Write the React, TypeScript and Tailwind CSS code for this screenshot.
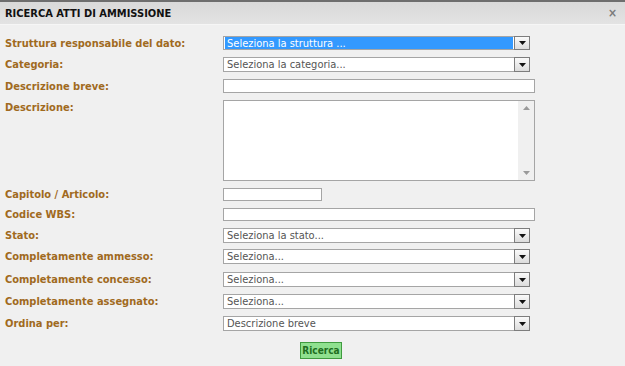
import React from "react"

const labelCls = "w-[218px] shrink-0 font-bold text-[11px] leading-none text-[#a06a1e]"

function SelectBox({ text, highlight, h = "h-[15px]" }: { text: string; highlight?: boolean; h?: string }) {
  return (
    <div className={`flex w-[307px] ${h} items-stretch border border-[#a5a5a5] bg-white`}>
      <div className="flex flex-1 items-center px-[1px]">
        <span
          className={`flex h-full flex-1 items-center px-[2px] text-[11px] leading-none ${
            highlight ? "bg-[#3399ff] text-white" : "text-[#555]"
          }`}
        >
          {text}
        </span>
      </div>
      <div className="my-[-1px] mr-[-1px] flex w-[16px] items-center justify-center border border-[#7d7d7d] bg-gradient-to-b from-[#fafafa] to-[#dcdcdc]">
        <svg width="7" height="4" viewBox="0 0 7 4">
          <path d="M0 0 L7 0 L3.5 4 Z" fill="#111" />
        </svg>
      </div>
    </div>
  )
}

function Row({ label, mt, children, top }: { label: string; mt: string; children: React.ReactNode; top?: boolean }) {
  return (
    <div className={`flex ${top ? "items-start" : "items-center"} ${mt}`}>
      <div className={`${labelCls} ${top ? "pt-[2px]" : ""}`}>{label}</div>
      {children}
    </div>
  )
}

export default function App() {
  return (
    <div
      className="h-[366px] w-[625px] overflow-hidden bg-[#f0f0f0]"
      style={{ fontFamily: "Tahoma, 'DejaVu Sans Condensed', 'DejaVu Sans', sans-serif" }}
    >
      <div className="flex h-[25px] items-center justify-between border-t-[2px] border-[#6e6e6e] border-b border-b-[#f6f6f6] bg-gradient-to-b from-[#d9d9d9] to-[#e3e3e3] pl-[5px] pr-[8px]">
        <span className="text-[11px] font-bold leading-none text-[#111]">RICERCA ATTI DI AMMISSIONE</span>
        <span className="text-[12px] font-bold leading-none text-[#7a7a7a]">×</span>
      </div>

      <div className="pl-[5px]">
        <Row label="Struttura responsabile del dato:" mt="mt-[11px]">
          <SelectBox text="Seleziona la struttura ..." highlight h="h-[14px]" />
        </Row>
        <Row label="Categoria:" mt="mt-[7px]">
          <SelectBox text="Seleziona la categoria..." />
        </Row>
        <Row label="Descrizione breve:" mt="mt-[7px]">
          <div className="h-[14px] w-[312px] border border-[#a5a5a5] bg-white" />
        </Row>
        <Row label="Descrizione:" mt="mt-[7px]" top>
          <div className="flex h-[81px] w-[312px] border border-[#a5a5a5] bg-white">
            <div className="flex-1" />
            <div className="flex w-[16px] flex-col items-center justify-between bg-[#f0f0f0] py-[5px]">
              <svg width="7" height="4" viewBox="0 0 7 4">
                <path d="M0 4 L7 4 L3.5 0 Z" fill="#9a9a9a" />
              </svg>
              <svg width="7" height="4" viewBox="0 0 7 4">
                <path d="M0 0 L7 0 L3.5 4 Z" fill="#9a9a9a" />
              </svg>
            </div>
          </div>
        </Row>
        <Row label="Capitolo / Articolo:" mt="mt-[7px]">
          <div className="h-[13px] w-[99px] border border-[#a5a5a5] bg-white" />
        </Row>
        <Row label="Codice WBS:" mt="mt-[7px]">
          <div className="h-[13px] w-[312px] border border-[#a5a5a5] bg-white" />
        </Row>
        <Row label="Stato:" mt="mt-[7px]">
          <SelectBox text="Seleziona la stato..." />
        </Row>
        <Row label="Completamente ammesso:" mt="mt-[6px]">
          <SelectBox text="Seleziona..." />
        </Row>
        <Row label="Completamente concesso:" mt="mt-[8px]">
          <SelectBox text="Seleziona..." />
        </Row>
        <Row label="Completamente assegnato:" mt="mt-[7px]">
          <SelectBox text="Seleziona..." />
        </Row>
        <Row label="Ordina per:" mt="mt-[7px]">
          <SelectBox text="Descrizione breve" />
        </Row>
        <div className="mt-[11px] pl-[295px]">
          <button className="flex h-[17px] w-[42px] items-center justify-center border border-[#3f9b3f] bg-[#8fe08f] text-[10px] font-bold leading-none text-[#1f6e1f]">
            Ricerca
          </button>
        </div>
      </div>
    </div>
  )
}
